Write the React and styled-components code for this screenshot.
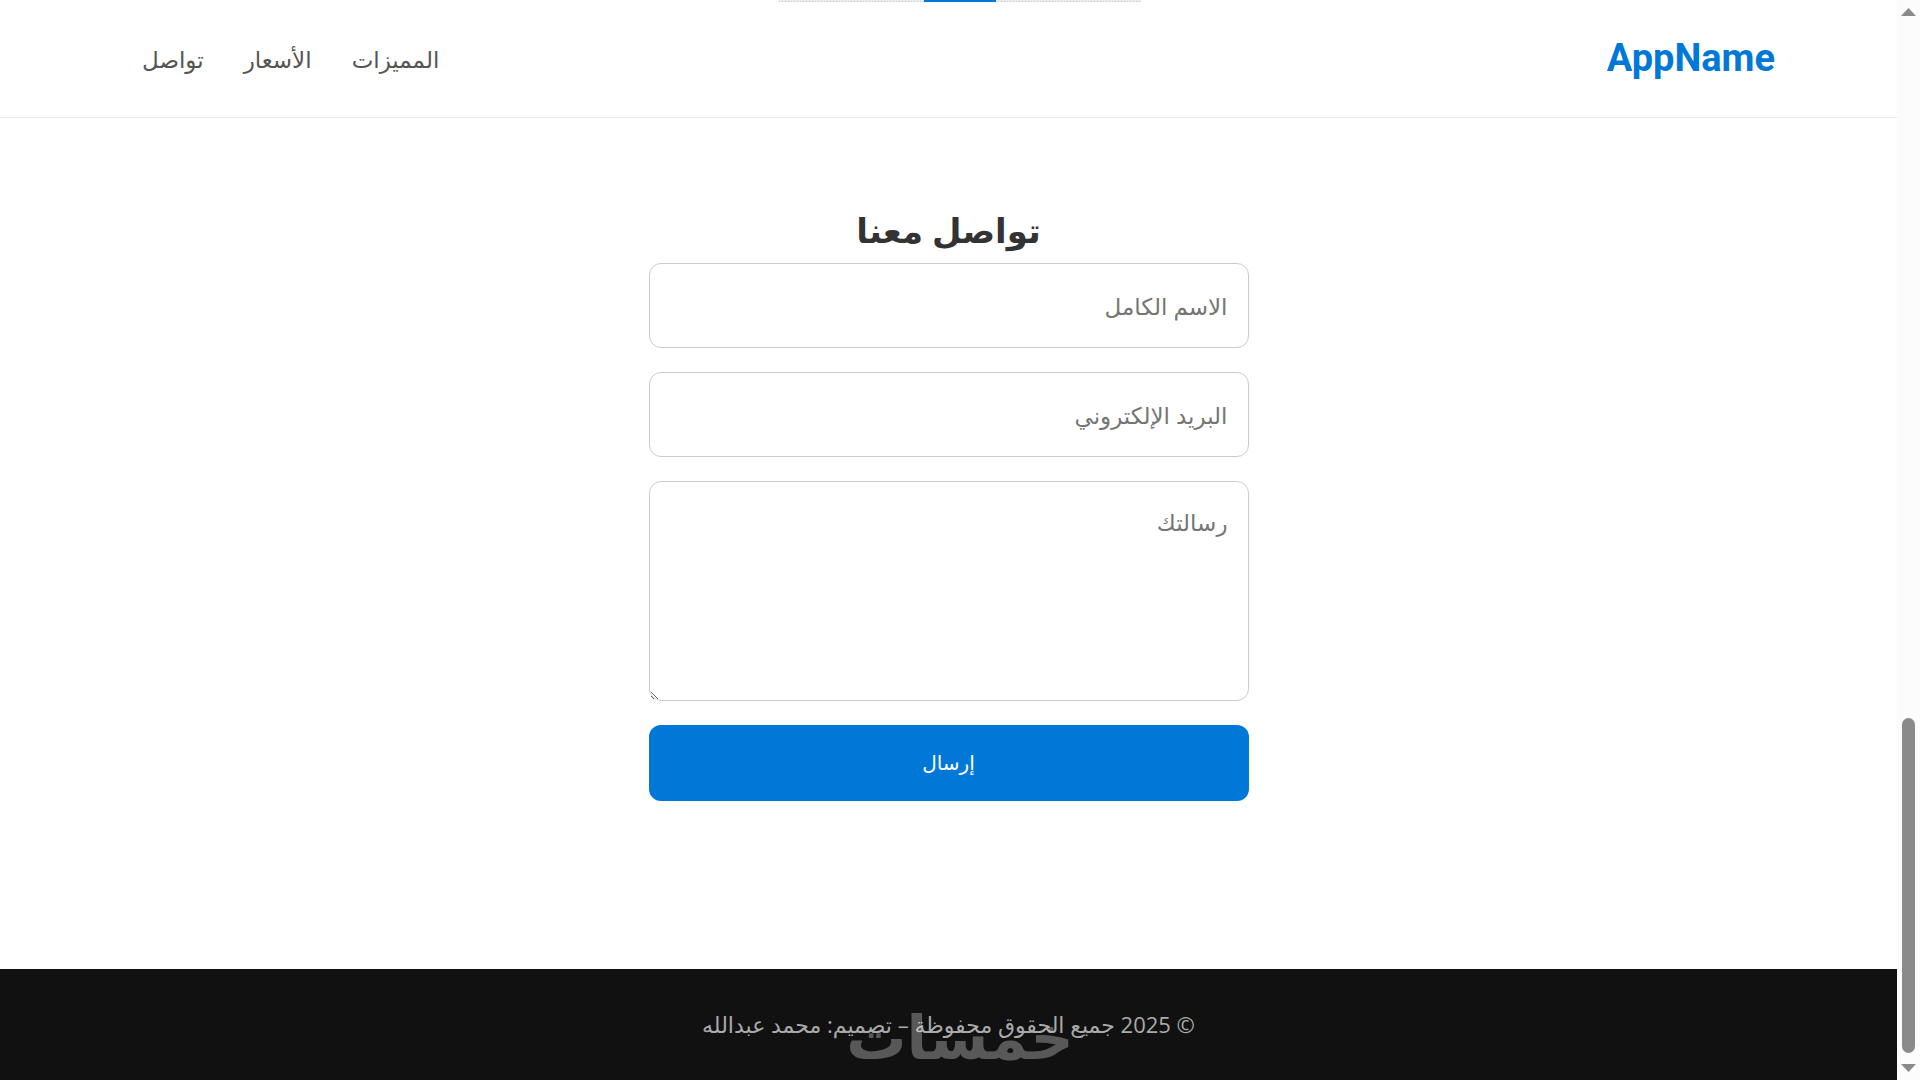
import React from 'react';

//-- Styles --//
import styled, {createGlobalStyle} from 'styled-components';

const colors = {
	brand: '#0078d7',
	heading: '#333333',
	link: '#555555',
	placeholder: '#757575',
	border: '#cccccc',
	line: '#eaeaea',
	footer: '#111111',
	footerText: '#aaaaaa',
	scroll: '#8a8a8a',
	track: '#fcfcfc',
};

const GlobalStyle = createGlobalStyle`
	* {
		box-sizing: border-box;
	}
	body {
		margin: 0;
		background: #ffffff;
		font-family: 'Open Sans', 'DejaVu Sans', sans-serif;
	}
`;

const Window = styled.div`
	display: flex;
	height: 100vh;
	overflow: hidden;
`;

const Page = styled.div`
	flex: 1;
	display: flex;
	flex-direction: column;
	min-width: 0;
`;

const Header = styled.header`
	display: flex;
	justify-content: space-between;
	align-items: center;
	padding: 32px 122px;
	border-bottom: 1px solid ${colors.line};
`;

const Logo = styled.a`
	color: ${colors.brand};
	font-family: Roboto, sans-serif;
	font-size: 38px;
	font-weight: 700;
	line-height: 53px;
	text-decoration: none;
`;

const Nav = styled.nav`
	display: flex;
`;

const NavLink = styled.a`
	margin: 0 20px;
	color: ${colors.link};
	font-size: 23px;
	line-height: 38px;
	text-decoration: none;
`;

const Contact = styled.main`
	flex: 1;
	display: flex;
	flex-direction: column;
	align-items: center;
	padding: 80px 24px;
`;

const Title = styled.h2`
	margin: 0;
	color: ${colors.heading};
	font-size: 34px;
	font-weight: 700;
	line-height: 65px;
`;

const Form = styled.form`
	display: flex;
	flex-direction: column;
	gap: 24px;
	width: 100%;
	max-width: 600px;
`;

const Field = styled.input`
	display: block;
	width: 100%;
	height: 85px;
	padding: 20px;
	border: 1px solid ${colors.border};
	border-radius: 12px;
	background: #ffffff;
	color: ${colors.heading};
	font-family: inherit;
	font-size: 23px;
	line-height: 40px;
	&::placeholder {
		color: ${colors.placeholder};
		opacity: 1;
	}
`;

const Message = styled(Field)`
	height: 220px;
	resize: vertical;
`;

const Submit = styled.button`
	padding: 20px;
	border: 0;
	border-radius: 12px;
	background: ${colors.brand};
	color: #ffffff;
	font-family: inherit;
	font-size: 20px;
	font-weight: 500;
	line-height: 36px;
	cursor: pointer;
`;

const Footer = styled.footer`
	padding: 36px 24px;
	background: ${colors.footer};
	color: ${colors.footerText};
	font-size: 22px;
	line-height: 39px;
	text-align: center;
`;

const Progress = styled.div`
	position: fixed;
	top: 0;
	left: 50%;
	transform: translateX(-50%);
	display: flex;
	justify-content: center;
	width: 362px;
	height: 2px;
	background: repeating-linear-gradient(90deg, #c8c8c8 0 1px, #ebebeb 1px 3px)
			0 1px / 100% 1px no-repeat,
		#ebebeb;
	&::after {
		content: '';
		width: 72px;
		background: ${colors.brand};
	}
`;

const Watermark = styled.div`
	position: fixed;
	bottom: 0;
	left: 50%;
	transform: translateX(-50%);
	color: #ffffff;
	font-size: 60px;
	font-weight: 700;
	line-height: 88px;
	opacity: 0.3;
	pointer-events: none;
`;

const Scrollbar = styled.div`
	display: flex;
	flex-direction: column;
	align-items: center;
	width: 23px;
	padding: 8px 0;
	background: ${colors.track};
`;

const Arrow = styled.svg`
	display: block;
	width: 15px;
	height: 8px;
	fill: ${colors.scroll};
`;

const Thumb = styled.div`
	width: 13px;
	height: 31vh;
	margin: auto 0 11px;
	border-radius: 7px;
	background: ${colors.scroll};
`;

//-- Data --//
const links = [
	{href: '#features', label: 'المميزات'},
	{href: '#pricing', label: 'الأسعار'},
	{href: '#contact', label: 'تواصل'},
];

const App = () => {
	return (
		<Window>
			<GlobalStyle />
			<Page dir='rtl' lang='ar'>
				<Header>
					<Logo href='#home'>AppName</Logo>
					<Nav>
						{links.map(link => (
							<NavLink key={link.href} href={link.href}>
								{link.label}
							</NavLink>
						))}
					</Nav>
				</Header>
				<Contact id='contact'>
					<Title>تواصل معنا</Title>
					<Form onSubmit={e => e.preventDefault()}>
						<Field
							type='text'
							name='name'
							placeholder='الاسم الكامل'
							aria-label='الاسم الكامل'
						/>
						<Field
							type='email'
							name='email'
							placeholder='البريد الإلكتروني'
							aria-label='البريد الإلكتروني'
						/>
						<Message
							as='textarea'
							name='message'
							placeholder='رسالتك'
							aria-label='رسالتك'
						/>
						<Submit type='submit'>إرسال</Submit>
					</Form>
				</Contact>
				<Footer>© 2025 جميع الحقوق محفوظة – تصميم: محمد عبدالله</Footer>
			</Page>
			<Scrollbar aria-hidden='true'>
				<Arrow viewBox='0 0 15 8'>
					<path d='M7.5 0 15 8H0z' />
				</Arrow>
				<Thumb />
				<Arrow viewBox='0 0 15 8'>
					<path d='M0 0h15L7.5 8z' />
				</Arrow>
			</Scrollbar>
			<Progress />
			<Watermark aria-hidden='true'>خمسات</Watermark>
		</Window>
	);
};

export default App;
